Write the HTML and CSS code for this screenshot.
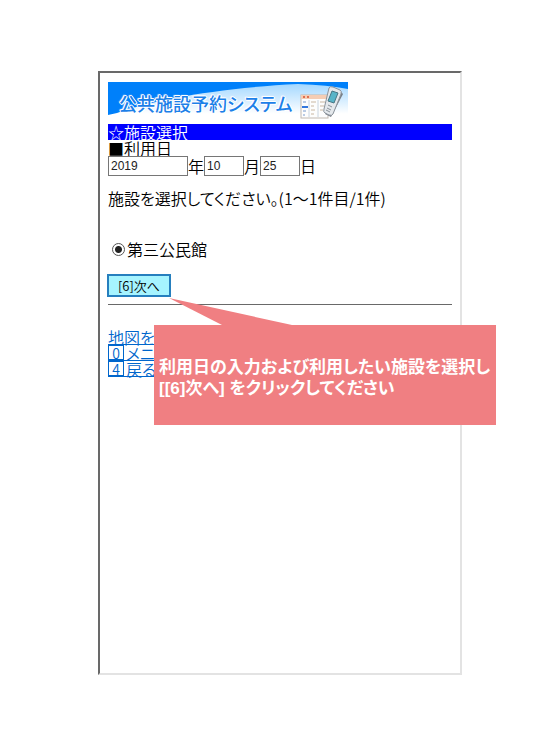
FILE: index.html
```html
<!DOCTYPE html>
<html lang="ja">
<head>
    <meta charset="UTF-8">
    <meta name="viewport" content="width=device-width, initial-scale=1.0">
    <title>公共施設予約システム</title>
    <link rel="stylesheet" href="styles.css">
</head>
<body>

    <div class="screen">
        <header class="banner">
            <svg class="banner-bg" viewBox="0 0 240 37" preserveAspectRatio="none" aria-hidden="true">
                <defs>
                    <linearGradient id="wave" x1="0" y1="0" x2="0" y2="1">
                        <stop offset="0" stop-color="#a4d8ff"/>
                        <stop offset="0.85" stop-color="#ffffff"/>
                    </linearGradient>
                </defs>
                <rect width="240" height="37" fill="#0080fa"/>
                <path d="M0 33 L9 31 C45 18 110 6 190 2 Q220 3 240 7 V37 H0 Z" fill="url(#wave)"/>
            </svg>
            <h1 class="banner-title">公共施設予約システム</h1>
            <svg class="banner-icon" viewBox="0 0 44 37" aria-hidden="true">
                <rect x="1" y="13" width="27" height="23" fill="#fdfdfd" stroke="#c0b8b0"/>
                <rect x="1" y="13" width="27" height="4" fill="#f5cdb4"/>
                <path d="M3 15h2M7 15h2" stroke="#e07050" stroke-width="2"/>
                <path d="M9 18v17M18 18v17" stroke="#c8d4e0"/>
                <path d="M3 20h3M3 29h3M3 33h2" stroke="#7799cc"/>
                <path d="M2 25h6" stroke="#3377dd" stroke-width="2"/>
                <path d="M11 20h5M20 20h5M11 24h3M20 24h4M11 28h4M20 28h3M11 32h3" stroke="#c9b7a2"/>
                <path d="M25 32 L31 35 L43 12 L39 8 Z" fill="#777d84"/>
                <path d="M29 6 Q30 4 33 5 L40 8 Q42 9 41 12 L33 32 Q32 34 29 33 L25 31 Q23 30 24 27 Z" fill="#e4e8ec" stroke="#8a929a"/>
                <path d="M32 9 L38 11 L34 21 L28 19 Z" fill="#58b4c8" stroke="#477684"/>
                <path d="M28 23l4 2M27 26l4 2M26 28l4 2" stroke="#8a929a"/>
            </svg>
        </header>

        <h2 class="heading">☆施設選択</h2>

        <form class="form" onsubmit="return false">
            <div class="label">■利用日</div>
            <div class="date">
                <input type="text" class="field year" id="year" value="2019"><label for="year">年</label>
                <input type="text" class="field" id="month" value="10"><label for="month">月</label>
                <input type="text" class="field" id="day" value="25"><label for="day">日</label>
            </div>

            <p class="message">施設を選択してください。(1～1件目/1件)</p>

            <div class="choice">
                <input type="radio" class="radio" name="facility" id="facility1" checked>
                <label for="facility1">第三公民館</label>
            </div>

            <button type="submit" class="next">[6]次へ</button>
        </form>

        <hr class="line">

        <nav class="links">
            <a href="#">地図を見る</a>
            <a href="#"><span class="key">0</span>メニューへ</a>
            <a href="#"><span class="key">4</span>戻る</a>
        </nav>

        <div class="callout">
            <svg class="callout-tip" viewBox="0 0 123 27" aria-hidden="true">
                <path d="M0 0 L123 27 H53 Z" fill="#f07f82"/>
            </svg>
            利用日の入力および利用したい施設を選択し<br>
            [[6]次へ] をクリックしてください
        </div>
    </div>

</body>
</html>
```
FILE: styles.css
```css
* {
    margin: 0;
    padding: 0;
    box-sizing: border-box;
}

body {
    padding: 71px 98px 75px;
    background: white;
    color: #000;
    font-family: "Noto Sans CJK JP", sans-serif;
    font-size: 16px;
    font-weight: 350;
    line-height: 16px;
    font-feature-settings: "palt";
}

.screen {
    position: relative;
    min-height: calc(100vh - 146px);
    padding: 9px 8px;
    border: 2px solid;
    border-color: #696969 #e3e3e3 #e3e3e3 #696969;
}

/* Banner */
.banner {
    position: relative;
    display: flex;
    align-items: center;
    width: 240px;
    height: 37px;
    margin-bottom: 5px;
    padding-left: 11px;
}

.banner-bg {
    position: absolute;
    top: 0;
    left: 0;
    width: 100%;
    height: 100%;
}

.banner-title {
    position: relative;
    flex: 1;
    padding-top: 4px;
    color: #1c80e8;
    font-size: 18px;
    font-weight: 500;
    line-height: 24px;
    white-space: nowrap;
    text-shadow: 1px 0 #fff, -1px 0 #fff, 0 1px #fff, 0 -1px #fff, 1px 1px 1px #fff, -1px -1px 1px #fff;
}

.banner-icon {
    position: relative;
    width: 44px;
    height: 37px;
    margin-right: 4px;
}

.heading {
    background: #0000ff;
    color: white;
    font-size: 16px;
    font-weight: 350;
}

/* Form */
.date {
    display: flex;
    align-items: center;
}

.date label {
    width: 16px;
}

.field {
    width: 40px;
    height: 20px;
    padding: 0 2px;
    border: 1px solid #767676;
    background: white;
    color: #222;
    font-family: "Liberation Sans", sans-serif;
    font-size: 12px;
}

.year {
    width: 80px;
}

.message {
    margin-top: 14px;
}

.choice {
    display: flex;
    align-items: center;
    gap: 2px;
    margin: 35px 0 17px 4px;
}

.radio {
    appearance: none;
    width: 13px;
    height: 13px;
    border: 1px solid #555;
    border-radius: 50%;
    background: radial-gradient(circle, #222 3px, white 4px);
}

.next {
    display: block;
    height: 23px;
    margin-left: -1px;
    padding: 0 9px;
    border: 2px solid #267fbe;
    background: #a6f4ff;
    color: #000;
    font-family: inherit;
    font-size: 13px;
    font-weight: 350;
    line-height: 16px;
    cursor: pointer;
}

.line {
    margin: 7px 0 24px;
    border: 0;
    border-top: 1px solid #696969;
}

/* Links */
.links {
    display: flex;
    flex-direction: column;
    align-items: flex-start;
}

.links a {
    display: flex;
    gap: 2px;
    height: 16px;
    border-bottom: 1px solid #0066cc;
    color: #0066cc;
    text-decoration: none;
}

.key {
    width: 16px;
    border: 1px solid #0066cc;
    font-size: 14px;
    line-height: 14px;
    text-align: center;
}

/* Balloon over the screen */
.callout {
    position: absolute;
    top: 252px;
    left: 54px;
    right: -36px;
    padding: 32px 5px 26px;
    background: #f07f82;
    color: white;
    font-family: "Liberation Sans", "Noto Sans CJK JP", sans-serif;
    font-size: 17px;
    font-weight: 700;
    line-height: 21px;
    white-space: nowrap;
}

.callout-tip {
    position: absolute;
    bottom: 100%;
    left: 15px;
    width: 123px;
    height: 27px;
}
```
